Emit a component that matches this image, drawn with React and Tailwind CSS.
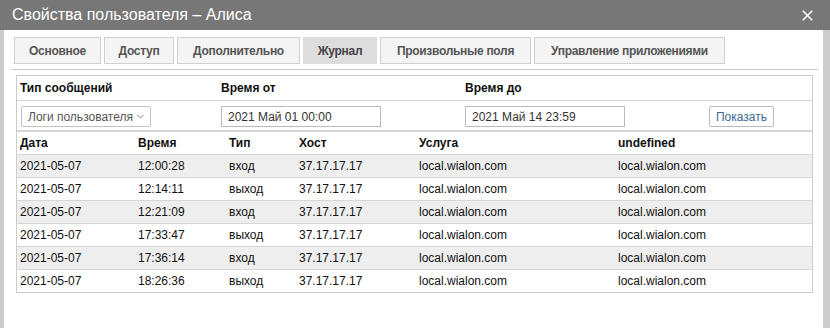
export default function App() {
  const tabs = [
    { t: "Основное", w: "w-[87px]" },
    { t: "Доступ", w: "w-[70px]" },
    { t: "Дополнительно", w: "w-[123px]" },
    { t: "Журнал", w: "w-[74px]", active: true },
    { t: "Произвольные поля", w: "w-[151px]" },
    { t: "Управление приложениями", w: "w-[191px]" },
  ];
  const rows = [
    ["2021-05-07", "12:00:28", "вход"],
    ["2021-05-07", "12:14:11", "выход"],
    ["2021-05-07", "12:21:09", "вход"],
    ["2021-05-07", "17:33:47", "выход"],
    ["2021-05-07", "17:36:14", "вход"],
    ["2021-05-07", "18:26:36", "выход"],
  ];
  const cols = "grid grid-cols-[118px_91px_70px_120px_199px_1fr]";
  return (
    <div className="w-[830px] h-[328px] bg-white overflow-hidden font-['Liberation_Sans',Arial,sans-serif]">
      <div className="h-[30px] bg-[#777777] flex items-center justify-between pl-3 pr-[17px]">
        <span className="text-white text-[16px] leading-none">Свойства пользователя – Алиса</span>
        <svg width="11" height="11" viewBox="0 0 11 11" className="block">
          <path d="M0.8 0.8 L10.2 10.2 M10.2 0.8 L0.8 10.2" stroke="#ffffff" strokeWidth="1.6" fill="none" />
        </svg>
      </div>
      <div className="flex h-[298px]">
        <div className="w-1 bg-[#cccccc]" />
        <div className="flex-1 pl-[7px] pr-[5px]">
          <div className="pt-[7px] pl-[3px] flex gap-[3px]">
            {tabs.map((tab) => (
              <div
                key={tab.t}
                className={
                  tab.w +
                  " h-[27px] flex items-center justify-center border text-[12px] font-bold tracking-[-0.3px] whitespace-nowrap " +
                  (tab.active ? "bg-[#dddddd] border-[#dddddd] text-[#444444]" : "bg-[#f4f4f4] border-[#d0d0d0] text-[#555555]")
                }
              >
                {tab.t}
              </div>
            ))}
          </div>
          <div className="mt-[5px] h-px bg-[#cccccc]" />
          <div className="mt-[5px] mx-[5px] border border-[#cccccc] text-[12px] text-[#111111]">
            <div className="grid grid-cols-[204px_244px_244px_1fr] h-[25px] items-center border-b border-[#d6d6d6] font-bold">
              <div className="pl-[3px]">Тип сообщений</div>
              <div>Время от</div>
              <div>Время до</div>
              <div />
            </div>
            <div className="grid grid-cols-[204px_244px_244px_1fr] h-[31px] items-start pt-[5px] border-b-2 border-[#d6d6d6]">
              <div className="pl-[4px]">
                <div className="w-[130px] h-[21px] border border-[#c4c4c4] rounded-[2px] flex items-center justify-between pl-[6px] pr-[6px] text-[#555555]">
                  <span>Логи пользователя</span>
                  <svg width="7" height="5" viewBox="0 0 7 5">
                    <path d="M0.5 1 L3.5 4 L6.5 1" stroke="#888888" strokeWidth="1" fill="none" />
                  </svg>
                </div>
              </div>
              <div>
                <div className="w-[160px] h-[21px] border border-[#bbbbbb] flex items-center pl-[6px] text-[#333333]">2021 Май 01 00:00</div>
              </div>
              <div>
                <div className="w-[160px] h-[21px] border border-[#bbbbbb] flex items-center pl-[6px] text-[#333333]">2021 Май 14 23:59</div>
              </div>
              <div>
                <div className="w-[65px] h-[21px] border border-[#bbbbbb] rounded-[2px] flex items-center justify-center text-[#3a6a96]">Показать</div>
              </div>
            </div>
            <div className={cols + " h-[23px] items-center border-b border-[#d6d6d6] font-bold"}>
              {["Дата", "Время", "Тип", "Хост", "Услуга", "undefined"].map((h) => (
                <div key={h} className="pl-[3px]">{h}</div>
              ))}
            </div>
            {rows.map((r, i) => (
              <div
                key={i}
                className={
                  cols +
                  " items-center " +
                  (i < rows.length - 1 ? "h-[23px] border-b border-[#d6d6d6] " : "h-[22px] ") +
                  (i % 2 === 0 ? "bg-[#eeeeee]" : "bg-white")
                }
              >
                <div className="pl-[3px]">{r[0]}</div>
                <div className="pl-[3px]">{r[1]}</div>
                <div className="pl-[3px]">{r[2]}</div>
                <div className="pl-[3px]">37.17.17.17</div>
                <div className="pl-[3px]">local.wialon.com</div>
                <div className="pl-[3px]">local.wialon.com</div>
              </div>
            ))}
          </div>
        </div>
        <div className="w-[7px] bg-[#cccccc]" />
      </div>
    </div>
  );
}
